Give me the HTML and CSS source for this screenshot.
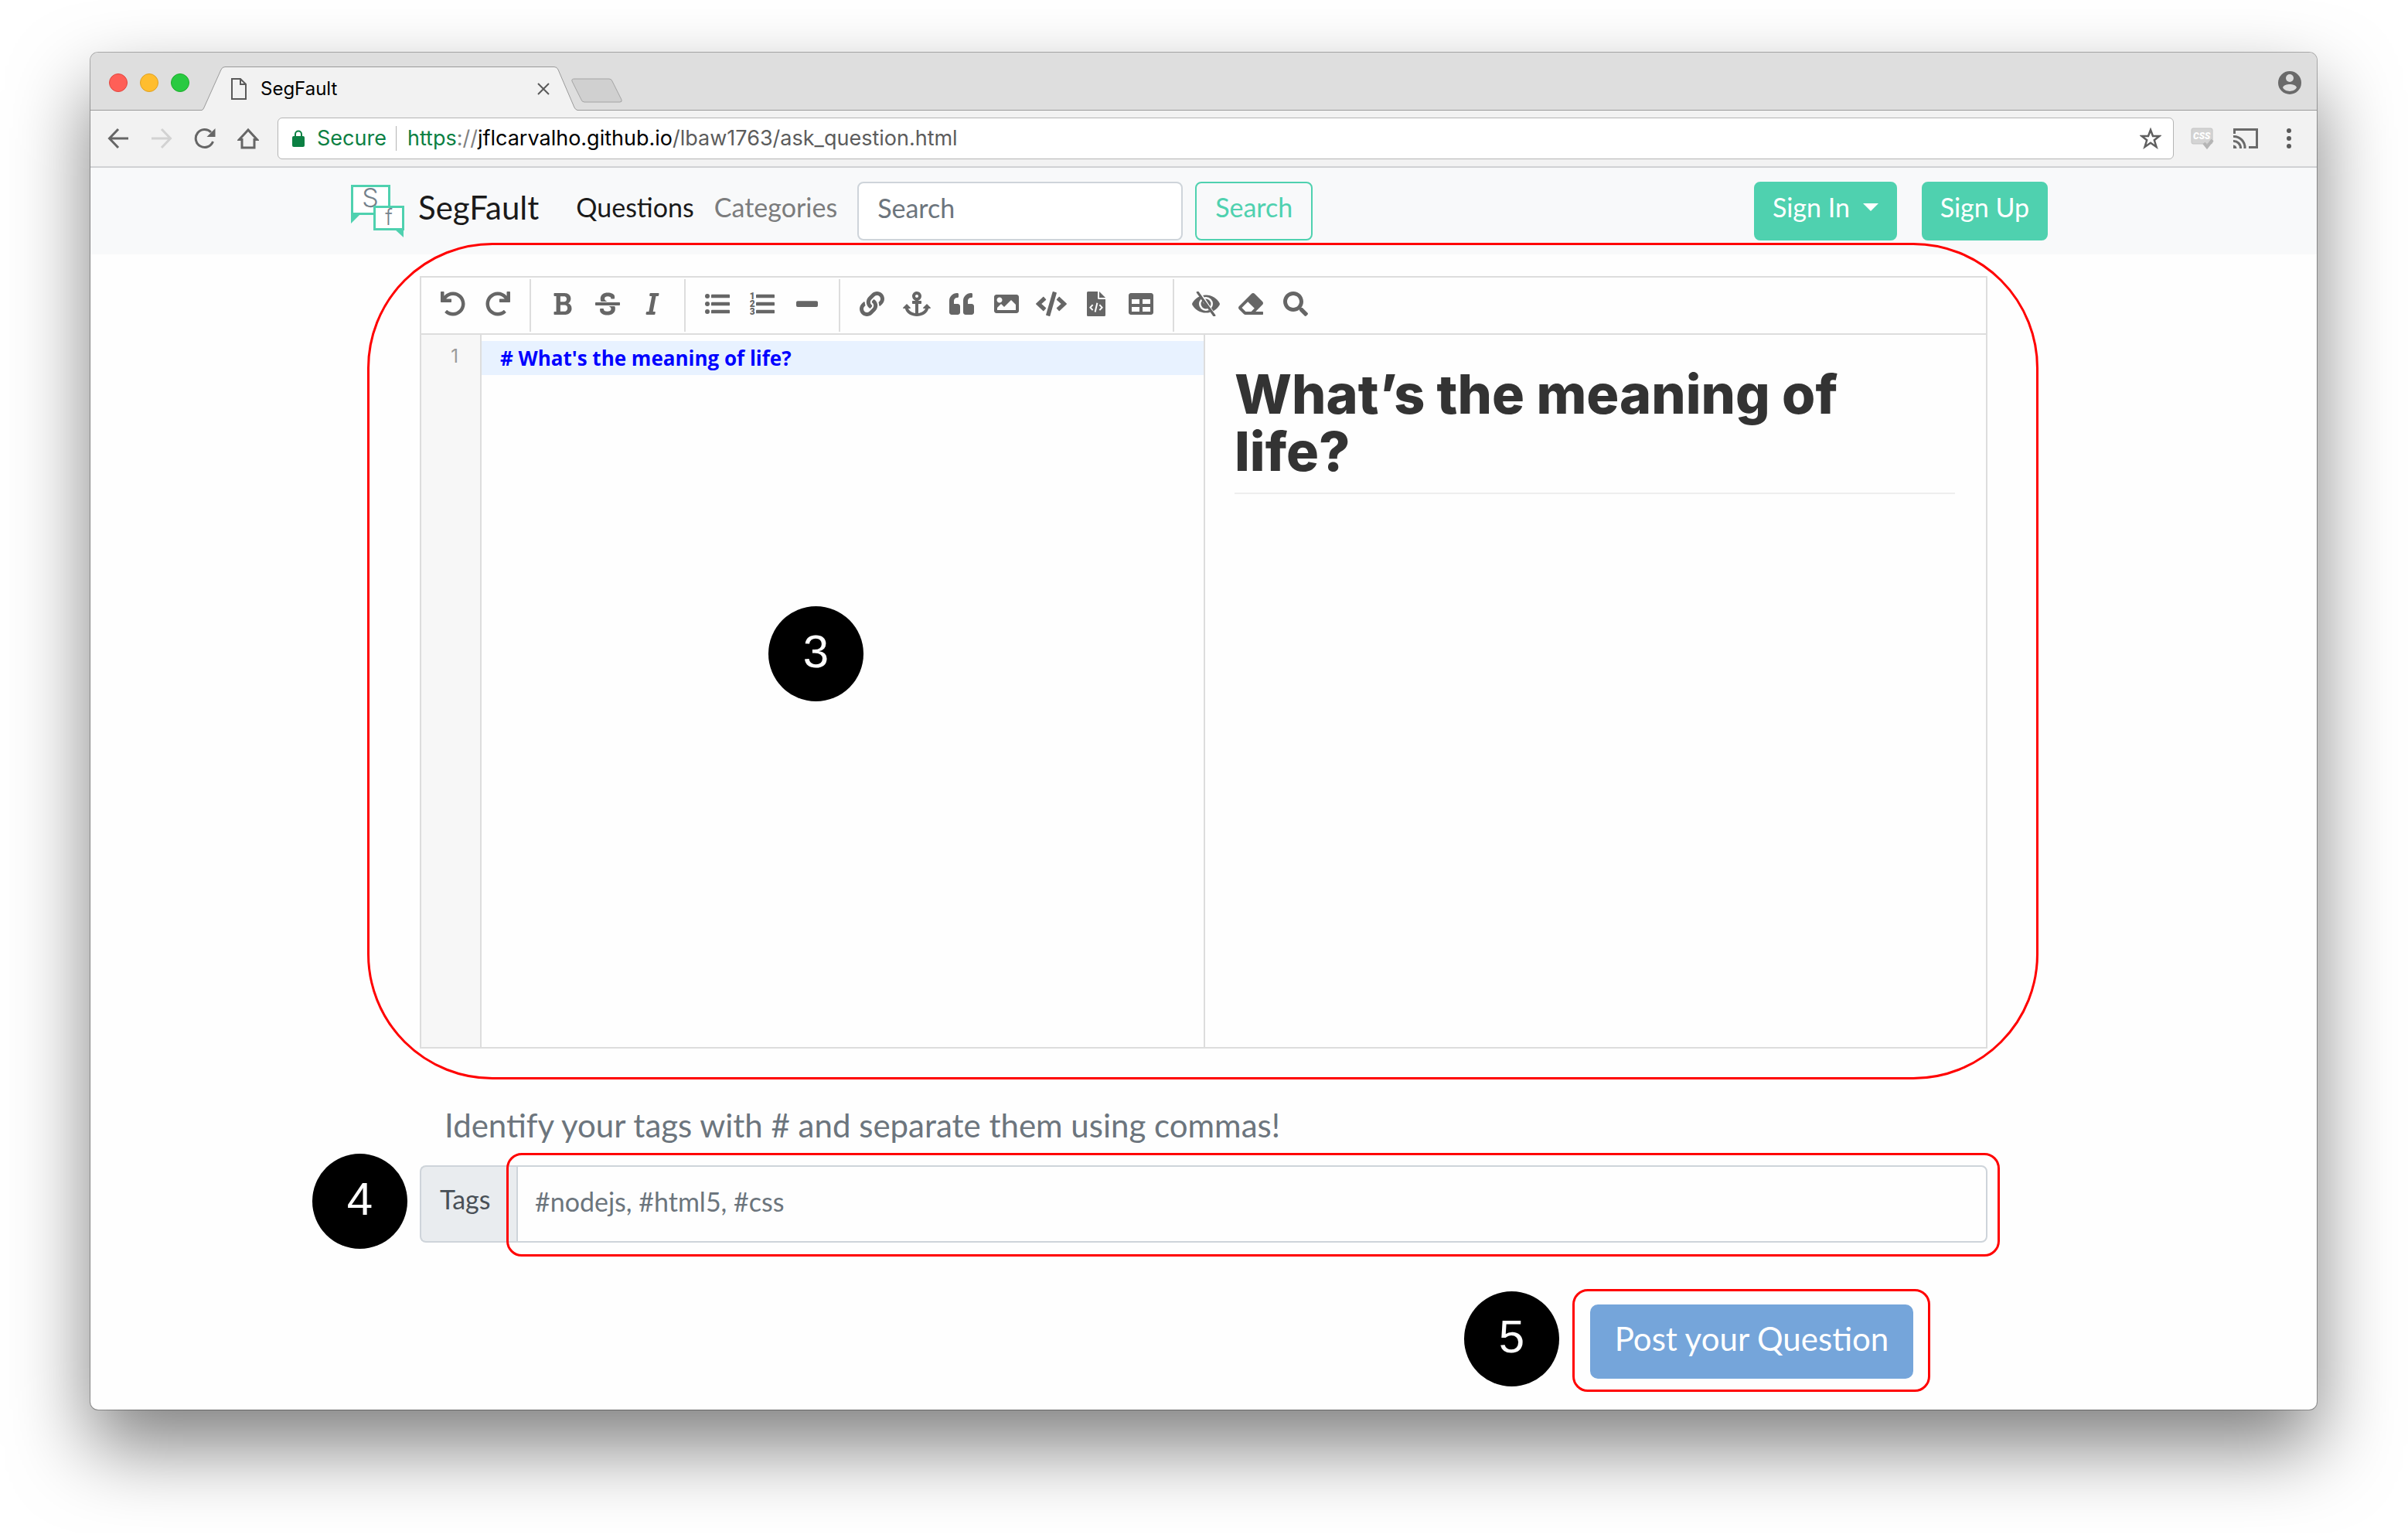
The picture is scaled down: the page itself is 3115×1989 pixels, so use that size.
FILE: index.html
```html
<!DOCTYPE html>
<html lang="en">
<head>
<meta charset="utf-8">
<title>SegFault</title>
<link rel="stylesheet" href="styles.css">
</head>
<body>
<div class="window">
  <header class="tabstrip">
    <div class="lights"><span class="light light-red"></span><span class="light light-yellow"></span><span class="light light-green"></span></div>
    <div class="tab">
      <svg class="tab-shape" width="486" height="57" viewBox="0 0 486 57"><path d="M0 57V56.500Q2 56 3 53L25 4Q26.500.5 30 .5H456Q459.500.5 461 4L482 53Q483.500 56 486 56.500V57Z" fill="#f2f2f2"/><path d="M0 56.500Q2 56 3 53L25 4Q26.500.5 30 .5H456Q459.500.5 461 4L482 53Q483.500 56 486 56.500" fill="none" stroke="#9a9a9a"/></svg>
      <svg class="tab-icon" width="20" height="28" viewBox="0 0 20 28" fill="none" stroke="#5a5a5a" stroke-width="2"><path d="M1 1H12L19 8V27H1ZM12 1V8H19"/></svg>
      <span class="tab-title">SegFault</span>
      <button class="tab-close" aria-label="Close tab"><svg width="16" height="16" viewBox="0 0 16 16" stroke="#5a5a5a" stroke-width="2"><path d="M1 1L15 15M15 1L1 15"/></svg></button>
    </div>
    <button class="tab-new" aria-label="New tab"><svg width="67" height="32" viewBox="0 0 67 32"><path d="M4 1H49Q52 1 53 4L65 28Q66 31 63 31H17Q14 31 13 28L1 4Q0 1 4 1Z" fill="#d0d0d0" stroke="#a4a4a4"/></svg></button>
    <svg class="avatar" width="30" height="30" viewBox="0 0 30 30"><circle cx="15" cy="15" r="15" fill="#6a6a6a"/><circle cx="15" cy="9" r="5" fill="#dedede"/><path d="M6 21C8 15.500 22 15.500 24 21C21 27.500 9 27.500 6 21Z" fill="#dedede"/></svg>
  </header>
  <div class="toolbar">
    <nav class="browser-nav">
      <button aria-label="Back"><svg width="28" height="28" viewBox="0 0 28 28" fill="none" stroke="#666" stroke-width="3"><path d="M27 14H3M14 2L2.500 14L14 26"/></svg></button>
      <button aria-label="Forward"><svg width="28" height="28" viewBox="0 0 28 28" fill="none" stroke="#d2d2d2" stroke-width="3"><path d="M1 14H25M14 2L25.500 14L14 26"/></svg></button>
      <button aria-label="Reload"><svg width="28" height="28" viewBox="0 0 28 28"><path d="M24.500 18A11.500 11.500 0 1 1 22 6" fill="none" stroke="#666" stroke-width="3"/><path d="M27.500 1V12H16.500Z" fill="#666"/></svg></button>
      <button aria-label="Home"><svg width="28" height="28" viewBox="0 0 28 28" fill="none" stroke="#666" stroke-width="3"><path d="M14 3L2.500 15.500H6V26H22V15.500H25.500Z"/></svg></button>
    </nav>
    <div class="urlbar">
      <svg width="16" height="22" viewBox="0 0 16 22"><rect y="8" width="16" height="14" rx="2" fill="#0b8043"/><path d="M4 9V5.500a4 4 0 0 1 8 0V9" fill="none" stroke="#0b8043" stroke-width="2"/></svg>
      <span class="secure">Secure</span>
      <span class="url"><span class="url-scheme">https</span><span class="url-slashes">://</span>jflcarvalho.github.io<span class="url-path">/lbaw1763/ask_question.html</span></span>
      <svg class="star" width="28" height="28" viewBox="0 0 28 28" fill="none" stroke="#5f5f5f" stroke-width="2.500"><path d="M14 3L17 11H25.500L18.800 16.300L21.500 25L14 19.800L6.500 25L9.200 16.300L2.500 11H11Z"/></svg>
    </div>
    <div class="extensions">
      <svg width="30" height="28" viewBox="0 0 30 28"><rect x="1" y="1" width="27" height="20" rx="2" fill="#d4d4d4" stroke="#c2c2c2"/><text x="3" y="15" font-family="Roboto, sans-serif" font-weight="900" font-style="italic" font-size="12" fill="#fff">CSS</text><path d="M17 20L21 25L28 16" fill="none" stroke="#b5b5b5" stroke-width="4"/></svg>
      <svg width="34" height="28" viewBox="0 0 34 28" fill="none" stroke="#6a6a6a" stroke-width="3"><path d="M2.500 8V2.500H31.500V25.500H21M1 11.500A14.500 14.500 0 0 1 16 27M1 17.500A9 9 0 0 1 10.500 27"/><path d="M1 22.500A5 5 0 0 1 5.500 27H1Z" fill="#6a6a6a" stroke="none"/></svg>
      <svg width="6" height="28" viewBox="0 0 6 28" fill="#5a5a5a"><circle cx="3" cy="4" r="3"/><circle cx="3" cy="14" r="3"/><circle cx="3" cy="24" r="3"/></svg>
    </div>
  </div>

  <nav class="navbar">
    <div class="navbar-inner">
      <a class="brand" href="#">
        <svg width="70" height="70" viewBox="0 0 70 70"><path d="M1 2H51V38H14L1 51Z" fill="#4fd1af"/><rect x="2.500" y="2.500" width="48" height="36" fill="#fff" stroke="#4fd1af" stroke-width="3"/><text x="26" y="30" text-anchor="middle" class="logo-letter" font-size="34">S</text><path d="M57 58H69V69Z" fill="#4fd1af"/><rect x="31.500" y="29.500" width="37" height="29" fill="#fff" stroke="#4fd1af" stroke-width="3"/><text x="50" y="53" text-anchor="middle" class="logo-letter" font-size="28">f</text></svg>
        <span>SegFault</span>
      </a>
      <a class="nav-link active" href="#">Questions</a>
      <a class="nav-link" href="#">Categories</a>
      <form class="search">
        <input class="field" type="text" placeholder="Search" aria-label="Search">
        <button class="btn btn-outline" type="button">Search</button>
      </form>
      <div class="account">
        <button class="btn btn-mint" type="button">Sign In <span class="caret"></span></button>
        <button class="btn btn-mint" type="button">Sign Up</button>
      </div>
    </div>
  </nav>

  <main class="page">
    <section class="editor">
      <div class="editor-tools">
        <div class="tool-group">
          <button aria-label="Undo"><svg viewBox="0 0 512 512"><path d="M212.333 224.333H12c-6.627 0-12-5.373-12-12V12C0 5.373 5.373 0 12 0h48c6.627 0 12 5.373 12 12v78.112C117.773 39.279 184.26 7.47 258.175 8.007c136.906.994 246.448 111.623 246.157 248.532C504.041 393.258 393.12 504 256.333 504c-64.089 0-122.496-24.313-166.51-64.215-5.099-4.622-5.334-12.554-.467-17.42l33.967-33.967c4.474-4.474 11.662-4.717 16.401-.525C170.76 415.336 211.58 432 256.333 432c97.268 0 176-78.716 176-176 0-97.267-78.716-176-176-176-58.496 0-110.28 28.476-142.274 72.333h98.274c6.627 0 12 5.373 12 12v48c0 6.627-5.373 12-12 12z"/></svg></button>
          <button aria-label="Redo"><svg viewBox="0 0 512 512"><path transform="matrix(-1 0 0 1 512 0)" d="M212.333 224.333H12c-6.627 0-12-5.373-12-12V12C0 5.373 5.373 0 12 0h48c6.627 0 12 5.373 12 12v78.112C117.773 39.279 184.26 7.47 258.175 8.007c136.906.994 246.448 111.623 246.157 248.532C504.041 393.258 393.12 504 256.333 504c-64.089 0-122.496-24.313-166.51-64.215-5.099-4.622-5.334-12.554-.467-17.42l33.967-33.967c4.474-4.474 11.662-4.717 16.401-.525C170.76 415.336 211.58 432 256.333 432c97.268 0 176-78.716 176-176 0-97.267-78.716-176-176-176-58.496 0-110.28 28.476-142.274 72.333h98.274c6.627 0 12 5.373 12 12v48c0 6.627-5.373 12-12 12z"/></svg></button>
        </div>
        <div class="tool-group">
          <button aria-label="Bold"><svg viewBox="0 0 384 512"><path d="M304.793 243.891c33.639-18.537 53.657-54.16 53.657-95.693 0-48.236-26.25-87.626-68.626-104.179C265.138 34.01 240.849 32 209.661 32H24c-8.837 0-16 7.163-16 16v33.049c0 8.837 7.163 16 16 16h33.113v318.53H24c-8.837 0-16 7.163-16 16V464c0 8.837 7.163 16 16 16h195.69c24.203 0 44.834-1.289 66.866-7.584C337.52 457.193 376 410.647 376 350.014c0-52.168-26.573-91.684-71.207-106.123zM142.217 100.809h67.444c16.294 0 27.536 2.019 37.525 6.717 15.828 8.479 24.906 26.502 24.906 49.446 0 35.029-20.32 56.79-53.029 56.79h-76.846V100.809zm112.642 305.475c-10.14 4.056-22.677 4.907-31.409 4.907h-81.233V281.943h84.367c39.645 0 63.057 25.38 63.057 63.057.001 28.425-13.66 52.483-34.782 61.284z"/></svg></button>
          <button aria-label="Strikethrough"><svg viewBox="0 0 512 512"><path d="M496 288H16c-8.837 0-16-7.163-16-16v-32c0-8.837 7.163-16 16-16h480c8.837 0 16 7.163 16 16v32c0 8.837-7.163 16-16 16zm-214.666 16c27.258 12.937 46.524 28.683 46.524 56.243 0 33.108-28.977 53.676-75.621 53.676-32.325 0-76.874-12.08-76.874-44.271V368c0-8.837-7.164-16-16-16H113.75c-8.836 0-16 7.163-16 16v19.204c0 66.845 77.717 101.82 154.487 101.82 88.578 0 162.013-45.438 162.013-134.424 0-19.815-3.618-36.417-10.143-50.6H281.334zm-30.952-96c-32.422-13.505-56.836-28.946-56.836-59.683 0-33.92 30.901-47.406 64.962-47.406 42.647 0 64.962 16.593 64.962 32.985V136c0 8.837 7.163 16 16 16h45.613c8.836 0 16-7.163 16-16v-30.318c0-52.438-71.725-79.875-142.575-79.875-85.203 0-150.726 40.972-150.726 125.646 0 22.71 4.665 41.176 12.777 56.547h129.823z"/></svg></button>
          <button aria-label="Italic"><svg viewBox="0 0 320 512"><path d="M204.758 416h-33.849l62.092-320h40.725a16 16 0 0 0 15.704-12.937l6.242-32C297.599 41.184 290.034 32 279.968 32H120.235a16 16 0 0 0-15.704 12.937l-6.242 32C96.362 86.816 103.927 96 113.993 96h33.846l-62.09 320H46.278a16 16 0 0 0-15.704 12.935l-6.245 32C22.402 470.815 29.967 480 40.034 480h158.479a16 16 0 0 0 15.704-12.935l6.245-32c1.927-9.88-5.638-19.065-15.704-19.065z"/></svg></button>
        </div>
        <div class="tool-group">
          <button aria-label="Bulleted list"><svg viewBox="0 0 512 512"><circle cx="48" cy="96" r="48"/><circle cx="48" cy="256" r="48"/><circle cx="48" cy="416" r="48"/><rect x="128" y="60" width="384" height="72" rx="14"/><rect x="128" y="220" width="384" height="72" rx="14"/><rect x="128" y="380" width="384" height="72" rx="14"/></svg></button>
          <button aria-label="Numbered list"><svg viewBox="0 0 512 512"><rect x="128" y="60" width="384" height="72" rx="14"/><rect x="128" y="220" width="384" height="72" rx="14"/><rect x="128" y="380" width="384" height="72" rx="14"/><g font-family="Roboto, sans-serif" font-weight="900" font-size="190"><text x="-6" y="160">1</text><text x="-6" y="322">2</text><text x="-6" y="484">3</text></g></svg></button>
          <button aria-label="Horizontal rule"><svg viewBox="0 0 448 512"><rect y="194" width="448" height="124" rx="30"/></svg></button>
        </div>
        <div class="tool-group">
          <button aria-label="Link"><svg viewBox="0 0 512 512"><path d="M326.612 185.391c59.747 59.809 58.927 155.698.36 214.59-.11.12-.24.25-.36.37l-67.2 67.2c-59.27 59.27-155.699 59.262-214.96 0-59.27-59.26-59.27-155.7 0-214.96l37.106-37.106c9.84-9.84 26.786-3.3 27.294 10.606.648 17.722 3.826 35.527 9.69 52.721 1.986 5.822.567 12.262-3.783 16.612l-13.087 13.087c-28.026 28.026-28.905 73.66-1.155 101.96 28.024 28.579 74.086 28.749 102.325.51l67.2-67.19c28.191-28.191 28.073-73.757 0-101.83-3.701-3.694-7.429-6.564-10.341-8.569a16.037 16.037 0 0 1-6.947-12.606c-.396-10.567 3.348-21.456 11.698-29.806l21.054-21.055c5.521-5.521 14.182-6.199 20.584-1.731a152.482 152.482 0 0 1 20.522 17.197zM467.547 44.449c-59.261-59.262-155.69-59.27-214.96 0l-67.2 67.2c-.12.12-.25.25-.36.37-58.566 58.892-59.387 154.781.36 214.59a152.454 152.454 0 0 0 20.521 17.196c6.402 4.468 15.064 3.789 20.584-1.731l21.054-21.055c8.35-8.35 12.094-19.239 11.698-29.806a16.037 16.037 0 0 0-6.947-12.606c-2.912-2.005-6.64-4.875-10.341-8.569-28.073-28.073-28.191-73.639 0-101.83l67.2-67.19c28.239-28.239 74.3-28.069 102.325.51 27.75 28.3 26.872 73.934-1.155 101.96l-13.087 13.087c-4.35 4.35-5.769 10.79-3.783 16.612 5.864 17.194 9.042 34.999 9.69 52.721.509 13.906 17.454 20.446 27.294 10.606l37.106-37.106c59.271-59.259 59.271-155.699.001-214.959z"/></svg></button>
          <button aria-label="Anchor"><svg viewBox="0 0 576 512"><path d="M12.971 352h32.394C67.172 454.735 181.944 512 288 512c106.229 0 220.853-57.38 242.635-160h32.394c10.691 0 16.045-12.926 8.485-20.485l-67.029-67.029c-4.686-4.686-12.284-4.686-16.971 0l-67.029 67.029c-7.56 7.56-2.206 20.485 8.485 20.485h35.146c-20.29 54.317-84.963 86.588-144.117 94.015V256h52c6.627 0 12-5.373 12-12v-40c0-6.627-5.373-12-12-12h-52v-5.47c37.281-13.226 63.995-48.788 64-90.539C384.005 43.772 341.605.738 289.37.01 235.723-.739 192 42.525 192 96c0 41.798 26.716 77.35 64 90.53V192h-52c-6.627 0-12 5.373-12 12v40c0 6.627 5.373 12 12 12h52v190.015c-58.936-7.399-123.82-39.679-144.117-94.015h35.146c10.691 0 16.045-12.926 8.485-20.485l-67.029-67.029c-4.686-4.686-12.284-4.686-16.971 0L4.485 331.515C-3.074 339.074 2.28 352 12.971 352zM288 64c17.645 0 32 14.355 32 32s-14.355 32-32 32-32-14.355-32-32 14.355-32 32-32z"/></svg></button>
          <button aria-label="Quote"><svg viewBox="0 0 512 512"><path d="M464 256h-80v-64c0-35.3 28.7-64 64-64h8c13.3 0 24-10.7 24-24V56c0-13.3-10.7-24-24-24h-8c-88.4 0-160 71.6-160 160v240c0 26.5 21.5 48 48 48h128c26.5 0 48-21.5 48-48V304c0-26.500-21.500-48-48-48zm-288 0H96v-64c0-35.3 28.7-64 64-64h8c13.3 0 24-10.7 24-24V56c0-13.3-10.7-24-24-24h-8C71.6 32 0 103.6 0 192v240c0 26.5 21.5 48 48 48h128c26.5 0 48-21.5 48-48V304c0-26.500-21.500-48-48-48z"/></svg></button>
          <button aria-label="Image"><svg viewBox="0 0 512 512"><path d="M464 448H48c-26.51 0-48-21.49-48-48V112c0-26.51 21.49-48 48-48h416c26.51 0 48 21.49 48 48v288c0 26.51-21.49 48-48 48zM112 120c-30.928 0-56 25.072-56 56s25.072 56 56 56 56-25.072 56-56-25.072-56-56-56zM64 384h384V272l-87.515-87.515c-4.686-4.686-12.284-4.686-16.971 0L208 320l-55.515-55.515c-4.686-4.686-12.284-4.686-16.971 0L64 336v48z"/></svg></button>
          <button aria-label="Inline code"><svg viewBox="0 0 640 512"><path d="M278.9 511.5l-61-17.7c-6.4-1.8-10-8.5-8.2-14.9L346.2 8.7c1.8-6.4 8.5-10 14.9-8.2l61 17.7c6.4 1.8 10 8.5 8.2 14.9L293.8 503.3c-1.9 6.4-8.5 10.1-14.9 8.2zm-114-112.2l43.5-46.4c4.6-4.9 4.3-12.7-.8-17.2L117 256l90.6-79.7c5.1-4.5 5.5-12.3.8-17.2l-43.5-46.4c-4.5-4.8-12.1-5.1-17-.5L3.8 247.2c-5.1 4.7-5.1 12.8 0 17.5l144.1 135.1c4.9 4.6 12.5 4.4 17-.5zm327.2.6l144.1-135.1c5.1-4.7 5.1-12.8 0-17.5L492.1 112.1c-4.8-4.5-12.4-4.3-17 .5L431.6 159c-4.6 4.9-4.3 12.7.8 17.2L523 256l-90.6 79.7c-5.1 4.5-5.5 12.3-.8 17.2l43.5 46.4c4.5 4.9 12.1 5.1 17 .6z"/></svg></button>
          <button aria-label="Code block"><svg viewBox="0 0 384 512"><path d="M24 0H224V136Q224 160 248 160H384V488Q384 512 360 512H24Q0 512 0 488V24Q0 0 24 0ZM256 0L384 128H256Z"/><path d="M122 274L70 330L122 386M262 274L314 330L262 386M214 236L170 424" fill="none" stroke="#fff" stroke-width="32"/></svg></button>
          <button aria-label="Table"><svg viewBox="0 0 512 512"><path d="M464 32H48C21.49 32 0 53.49 0 80v352c0 26.51 21.49 48 48 48h416c26.51 0 48-21.49 48-48V80c0-26.51-21.49-48-48-48zM224 416H64v-96h160v96zm0-160H64v-96h160v96zm224 160H288v-96h160v96zm0-160H288v-96h160v96z"/></svg></button>
        </div>
        <div class="tool-group">
          <button aria-label="Toggle preview"><svg viewBox="0 0 576 512"><path d="M6 238C60 140 165 72 288 72S516 140 570 238Q578 256 570 274C516 372 411 440 288 440S60 372 6 274Q-2 256 6 238Z"/><circle cx="288" cy="256" r="124" fill="none" stroke="#fff" stroke-width="40"/><circle cx="262" cy="216" r="34" fill="#fff"/><path d="M80 -20L448 540" stroke="#fff" stroke-width="64" transform="translate(38 -8)"/><path d="M118 18L460 496" stroke="#666" stroke-width="52" stroke-linecap="round"/></svg></button>
          <button aria-label="Clear"><svg viewBox="0 0 512 512"><path d="M497.941 273.941c18.745-18.745 18.745-49.137 0-67.882l-160-160c-18.745-18.745-49.136-18.746-67.883 0l-256 256c-18.745 18.745-18.745 49.137 0 67.882l96 96A48.004 48.004 0 0 0 144 480h356c6.627 0 12-5.373 12-12v-40c0-6.627-5.373-12-12-12H355.883l142.058-142.059zm-302.627-62.627l137.373 137.373L265.373 416H150.628l-80-80 124.686-124.686z"/></svg></button>
          <button aria-label="Find"><svg viewBox="0 0 512 512"><path d="M505 442.7L405.3 343c-4.5-4.5-10.6-7-17-7H372c27.6-35.3 44-79.7 44-128C416 93.1 322.9 0 208 0S0 93.1 0 208s93.1 208 208 208c48.3 0 92.7-16.4 128-44v16.3c0 6.4 2.5 12.5 7 17l99.7 99.7c9.4 9.4 24.6 9.4 33.9 0l28.3-28.3c9.4-9.4 9.4-24.6.1-34zM208 336c-70.7 0-128-57.2-128-128 0-70.7 57.2-128 128-128 70.7 0 128 57.2 128 128 0 70.7-57.2 128-128 128z"/></svg></button>
        </div>
      </div>
      <div class="editor-body">
        <div class="source">
          <div class="gutter">1</div>
          <textarea class="code" aria-label="Question text" spellcheck="false"># What's the meaning of life?</textarea>
        </div>
        <article class="preview"><h1>What’s the meaning of life?</h1></article>
      </div>
      <div class="callout callout-editor"></div>
      <span class="step step-editor">3</span>
    </section>

    <p class="help">Identify your tags with # and separate them using commas!</p>
    <div class="tags">
      <label class="tags-label" for="tags">Tags</label>
      <div class="tags-field">
        <input id="tags" type="text" placeholder="#nodejs, #html5, #css">
        <div class="callout callout-tags"></div>
      </div>
      <span class="step step-tags">4</span>
    </div>
    <div class="actions">
      <div class="post-wrap">
        <button class="post" type="button">Post your Question</button>
        <div class="callout callout-post"></div>
        <span class="step step-post">5</span>
      </div>
    </div>
  </main>
</div>
</body>
</html>
```
FILE: styles.css
```css
* { box-sizing: border-box; }
html { background: #fff; }
body { margin: 0; padding: 68px 118px 160px 117px; font-family: Lato, "Liberation Sans", sans-serif; font-size: 34px; line-height: 48px; color: #212529; }
button { margin: 0; padding: 0; border: 0; background: none; font: inherit; color: inherit; }
svg { display: block; flex: none; }
input, textarea { margin: 0; font: inherit; outline: 0; }

.window { border-radius: 10px; background: #fefefe; box-shadow: 0 0 0 1px rgba(0,0,0,.3), 0 48px 100px rgba(0,0,0,.5); }

/* browser chrome */
.tabstrip { display: flex; height: 75px; padding: 18px 20px 0 24px; border-radius: 10px 10px 0 0; background: linear-gradient(#dedede 74px, #9a9a9a 74px); font-family: Inter, sans-serif; }
.lights { display: flex; gap: 16px; padding-top: 9px; }
.light { width: 24px; height: 24px; border-radius: 50%; }
.light-red { background: #ff5f57; border: 1px solid #e2463f; }
.light-yellow { background: #ffbd2e; border: 1px solid #dfa123; }
.light-green { background: #28ca41; border: 1px solid #1dad2b; }
.tab { position: relative; display: flex; align-items: center; width: 486px; height: 57px; margin-left: 16px; padding: 0 36px 0 38px; color: #000; font-size: 24px; line-height: 30px; }
.tab-shape { position: absolute; inset: 0; }
.tab-icon, .tab-title, .tab-close { position: relative; }
.tab-title { margin-left: 18px; flex: 1; }
.tab-new { align-self: flex-start; margin: 15px 0 0 -8px; }
.avatar { margin: 6px 0 0 auto; }
.toolbar { display: flex; align-items: center; height: 74px; padding: 0 33px 0 22px; border-bottom: 2px solid #d0d2d4; background: #f2f2f2; }
.browser-nav { display: flex; gap: 28px; }
.urlbar { flex: 1; display: flex; align-items: center; height: 54px; margin: 0 22px 0 24px; padding: 0 15px 0 18px; border: 1px solid #b4b4b4; border-radius: 6px; background: #fff; font-family: Inter, sans-serif; font-size: 27px; line-height: 32px; color: #000; }
.secure { margin-left: 16px; padding-right: 12px; border-right: 1px solid #b4b4b4; color: #0b8043; }
.url { flex: 1; margin-left: 14px; }
.url-scheme { color: #0b8043; }
.url-slashes { color: #808080; }
.url-path { color: #5c5c5c; }
.extensions { display: flex; align-items: center; gap: 24px; }
.extensions svg:last-child { margin-left: 12px; }

/* site navigation */
.navbar { background: #f8f9fa; }
.navbar-inner { display: flex; align-items: center; max-width: 2208px; height: 112px; margin: 0 auto; padding: 0 12px 0 0; }
.brand { display: flex; align-items: center; gap: 18px; margin-right: 48px; color: #1a1a1a; font-size: 42px; line-height: 52px; text-decoration: none; }
.brand span { padding-bottom: 10px; }
.logo-letter { font-family: Inter, sans-serif; font-weight: 300; fill: #74818b; }
.nav-link { margin-right: 26px; padding-bottom: 10px; color: #7b7c7d; text-decoration: none; }
.nav-link.active { color: #1a1a1a; }
.search { display: flex; gap: 16px; }
.field { width: 421px; height: 76px; padding: 7px 24px 17px; border: 2px solid #ced4da; border-radius: 8px; background: #fff; }
input::placeholder { color: #6c757d; opacity: 1; }
.btn { height: 76px; padding: 7px 24px 17px; border: 2px solid #4fd1af; border-radius: 8px; }
.btn-outline { color: #4fd1af; }
.btn-mint { padding-left: 22px; padding-right: 22px; background: #4fd1af; color: #fff; }
.account { display: flex; gap: 32px; margin-left: auto; }
.caret { display: inline-block; margin-left: 8px; vertical-align: 8px; border: 10px solid transparent; border-top-color: #fff; border-bottom: 0; }

/* question form */
.page { max-width: 2028px; margin: 0 auto; padding: 28px 0 40px; }
.editor { position: relative; border: 2px solid #ddd; }
.editor-tools { display: flex; height: 72px; padding: 2px 0; }
.tool-group { display: flex; align-items: center; padding: 0 12px 4px; border-right: 2px solid #ddd; }
.tool-group:last-child { border: 0; }
.tool-group button { display: flex; justify-content: center; width: 58px; }
.tool-group svg { height: 32px; fill: #666; }
.editor-body { display: grid; grid-template-columns: 1fr 1fr; min-height: 923px; border-top: 2px solid #ddd; }
.source { display: flex; }
.gutter { width: 78px; padding: 6px 28px 0 0; border-right: 2px solid #ddd; background: #f7f7f7; color: #999; font-family: Inter, sans-serif; font-size: 24px; line-height: 44px; text-align: right; }
.code { flex: 1; resize: none; border: 0; padding: 8px 24px; background: linear-gradient(#e8f2ff, #e8f2ff) 0 8px / 100% 44px no-repeat; color: #00f; font-family: "Open Sans", sans-serif; font-size: 26px; font-weight: 700; line-height: 44px; }
.preview { padding: 40px 40px 40px 38px; border-left: 2px solid #ddd; }
.preview h1 { margin: 0; padding-bottom: 16px; border-bottom: 2px solid #eee; color: #333; font-family: Inter, sans-serif; font-size: 70px; font-weight: 800; line-height: 74px; }
.help { margin: 0; padding: 69px 32px 22px; color: #6c757d; font-size: 42px; line-height: 60px; }
.tags { position: relative; display: flex; height: 100px; }
.tags-label { padding: 18px 24px 0; width: 125px; border: 2px solid #ced4da; border-right: 0; border-radius: 8px 0 0 8px; background: #e9ecef; color: #495057; }
.tags-field { position: relative; flex: 1; }
.tags-field input { width: 100%; height: 100px; padding: 18px 22px 26px; border: 2px solid #ced4da; border-radius: 0 8px 8px 0; background: #fefefe; }
.actions { display: flex; justify-content: flex-end; padding: 80px 96px 0 0; }
.post-wrap { position: relative; }
.post { display: block; min-width: 418px; height: 96px; padding: 0 30px 8px; border-radius: 10px; background: #75a5da; color: #fff; font-size: 42px; line-height: 60px; }

/* numbered annotations laid over the form */
.callout { position: absolute; border: 3px solid #f00; border-radius: 20px; pointer-events: none; }
.callout-editor { inset: -45px -68px -42px -70px; border-radius: 162px; }
.callout-tags { inset: -16px -16px -18px -13px; }
.callout-post { inset: -20px -22px -17px -23px; }
.step { position: absolute; width: 123px; height: 123px; border-radius: 50%; background: #000; color: #fff; font-family: "Liberation Sans", sans-serif; font-size: 60px; line-height: 118px; text-align: center; }
.step-editor { left: 449px; top: 425px; }
.step-tags { left: -139px; top: -15px; }
.step-post { left: -163px; top: -17px; }
```
